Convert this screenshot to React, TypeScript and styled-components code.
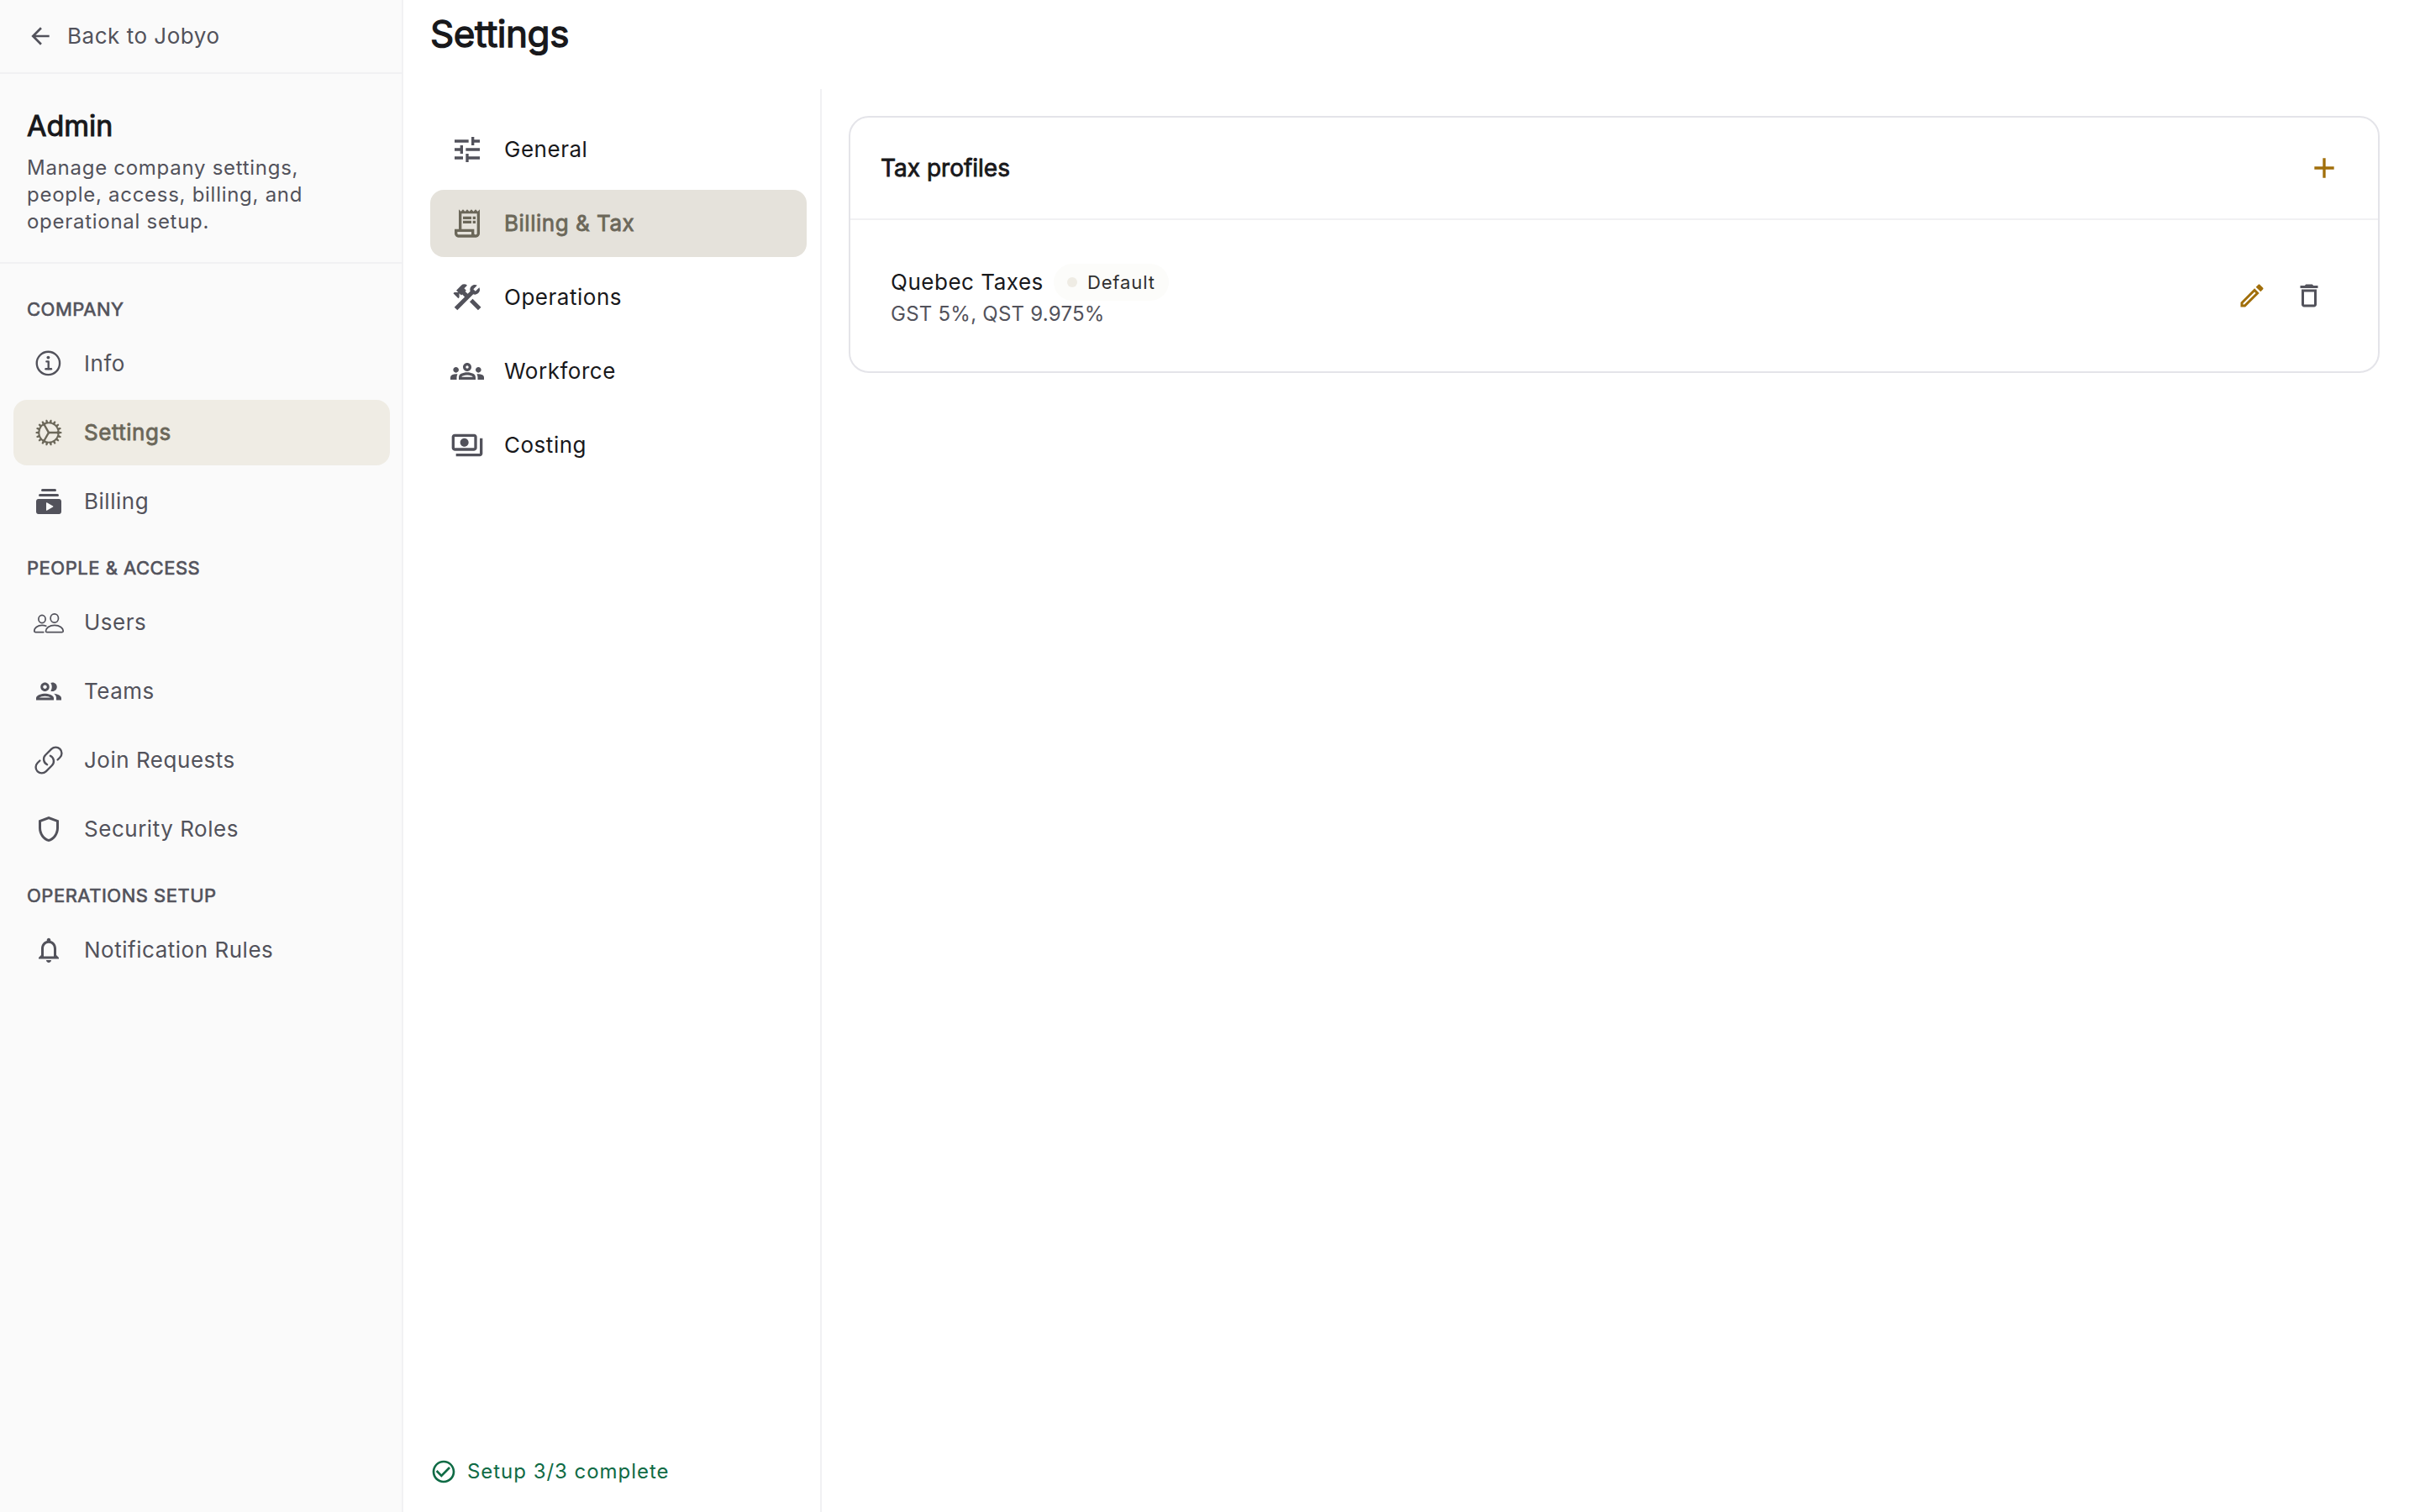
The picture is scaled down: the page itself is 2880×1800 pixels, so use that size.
import React from "react";
import styled, { createGlobalStyle, css } from "styled-components";
import {
  MdAdd,
  MdArrowBack,
  MdCheckCircleOutline,
  MdConstruction,
  MdDeleteOutline,
  MdNotificationsNone,
  MdOutlineEdit,
  MdOutlineGroups,
  MdOutlinePayments,
  MdOutlineReceiptLong,
  MdOutlineShield,
  MdTune,
} from "react-icons/md";
import { IoCogOutline, IoInformationCircleOutline } from "react-icons/io5";
import { HiOutlineLink } from "react-icons/hi2";

const color = {
  ink: "#18181b",
  muted: "#52525b",
  olive: "#6b6759",
  gold: "#a16f0b",
  green: "#0f6b45",
  line: "#f1f1f3",
  cardLine: "#e4e4e9",
  rail: "#fafafa",
  railActive: "#efece4",
  tabActive: "#e5e2db",
  chip: "#fcfcfa",
  chipText: "#303030",
  chipDot: "#efece4",
};

const GlobalStyle = createGlobalStyle`
  *, *::before, *::after { box-sizing: border-box; }
  body {
    margin: 0;
    background: #fff;
    color: ${color.ink};
    font-family: Inter, "Liberation Sans", sans-serif;
    font-size: 26px;
    line-height: 32px;
    letter-spacing: 0.02em;
  }
  h1, h2, h3, p, ul { margin: 0; padding: 0; font-weight: 400; }
  ul { list-style: none; }
  a { color: inherit; text-decoration: none; }
  svg { display: block; flex: none; }
`;

const emphasis = css`
  -webkit-text-stroke: 0.03em currentColor;
`;

const Shell = styled.div`
  display: grid;
  grid-template-columns: 480px minmax(0, 1fr);
  min-height: 100vh;
`;

const Rail = styled.aside`
  background: ${color.rail};
  border-right: 2px solid ${color.line};
  color: ${color.muted};
`;

const BackLink = styled.a`
  display: flex;
  align-items: center;
  gap: 16px;
  height: 88px;
  padding: 0 32px;
  border-bottom: 2px solid ${color.line};
`;

const Intro = styled.header`
  display: grid;
  gap: 12px;
  padding: 40px 32px 32px;
  border-bottom: 2px solid ${color.line};
`;

const IntroTitle = styled.h2`
  ${emphasis}
  color: ${color.ink};
  font-size: 34px;
  line-height: 44px;
  letter-spacing: normal;
`;

const IntroText = styled.p`
  font-size: 24px;
  letter-spacing: 0.03em;
`;

const RailNav = styled.nav`
  padding: 14px 14px 14px 16px;
`;

const RailHeading = styled.h3`
  ${emphasis}
  padding: 26px 16px 12px;
  font-size: 22px;
  line-height: 28px;
  text-transform: uppercase;
`;

const RailList = styled.ul`
  display: grid;
  gap: 4px;
`;

const navItem = css`
  display: flex;
  align-items: center;
  gap: 24px;
  padding: 0 24px;
  border-radius: 16px;
`;

const RailLink = styled.a<{ $active?: boolean }>`
  ${navItem}
  height: 78px;
  ${(p) =>
    p.$active &&
    css`
      ${emphasis}
      background: ${color.railActive};
      color: ${color.olive};
    `}
`;

const RailIcon = styled.span`
  display: flex;
  justify-content: center;
  width: 36px;
`;

const Main = styled.main`
  display: grid;
  grid-template-rows: auto 1fr;
`;

const PageHeader = styled.header`
  padding: 12px 32px 38px;
`;

const PageTitle = styled.h1`
  ${emphasis}
  font-size: 44px;
  line-height: 56px;
  letter-spacing: -0.01em;
`;

const Body = styled.div`
  display: grid;
  grid-template-columns: 498px minmax(0, 1fr);
`;

const Tabs = styled.div`
  display: flex;
  flex-direction: column;
  justify-content: space-between;
  padding: 32px 16px 32px 32px;
  border-right: 2px solid ${color.line};
`;

const TabList = styled.ul`
  display: grid;
  gap: 8px;
`;

const TabLink = styled.a<{ $active?: boolean }>`
  ${navItem}
  height: 80px;
  svg {
    color: ${color.muted};
  }
  ${(p) =>
    p.$active &&
    css`
      ${emphasis}
      background: ${color.tabActive};
      color: ${color.olive};
      svg {
        color: inherit;
      }
    `}
`;

const SetupStatus = styled.p`
  display: flex;
  align-items: center;
  gap: 12px;
  color: ${color.green};
  font-size: 24px;
  letter-spacing: 0.04em;
`;

const Content = styled.section`
  padding: 32px 48px 32px 32px;
`;

const Card = styled.section`
  border: 2px solid ${color.cardLine};
  border-radius: 24px;
`;

const CardHeader = styled.header`
  display: flex;
  align-items: center;
  justify-content: space-between;
  height: 122px;
  padding: 0 36px;
  border-bottom: 2px solid ${color.line};
`;

const CardTitle = styled.h2`
  ${emphasis}
  font-size: 28px;
  letter-spacing: normal;
`;

const IconButton = styled.button<{ $size: number; $tone: string }>`
  display: grid;
  place-items: center;
  width: ${(p) => p.$size}px;
  height: ${(p) => p.$size}px;
  padding: 0;
  border: 0;
  border-radius: 50%;
  background: none;
  color: ${(p) => p.$tone};
  cursor: pointer;
`;

const ProfileRow = styled.li`
  display: flex;
  align-items: center;
  justify-content: space-between;
  padding: 52px 48px;
`;

const ProfileName = styled.div`
  display: flex;
  align-items: center;
  gap: 12px;
`;

const Chip = styled.span`
  display: flex;
  align-items: center;
  gap: 12px;
  height: 44px;
  padding: 0 16px;
  border-radius: 22px;
  background: ${color.chip};
  color: ${color.chipText};
  font-size: 22px;
  letter-spacing: 0.04em;
  &::before {
    content: "";
    width: 12px;
    height: 12px;
    border-radius: 50%;
    background: ${color.chipDot};
  }
`;

const ProfileRates = styled.p`
  color: ${color.muted};
  font-size: 24px;
  letter-spacing: 0.01em;
`;

const Actions = styled.div`
  display: flex;
`;

const BillingIcon = ({ size }: { size: number }) => (
  <svg width={size} height={size} viewBox="0 0 24 24" fill="currentColor" aria-hidden="true">
    <rect x="6" y="2" width="12" height="2" rx="1" />
    <rect x="4" y="6" width="16" height="2" rx="1" />
    <path
      fillRule="evenodd"
      d="M3.8 10h16.4c1 0 1.8.8 1.8 1.8v8.4c0 1-.8 1.8-1.8 1.8H3.8c-1 0-1.8-.8-1.8-1.8v-8.4c0-1 .8-1.8 1.8-1.8zM10 13.1v5.8c0 .3.2.4.5.3l4.9-2.9c.3-.2.3-.4 0-.6l-4.9-2.9c-.3-.1-.5 0-.5.3z"
    />
  </svg>
);

const UsersIcon = ({ size }: { size: number }) => (
  <svg
    width={size}
    height={size}
    viewBox="0 0 36 36"
    fill="none"
    stroke="currentColor"
    strokeWidth="1.7"
    strokeLinecap="round"
    strokeLinejoin="round"
    aria-hidden="true"
  >
    <ellipse cx="10" cy="14" rx="4.1" ry="4.6" />
    <ellipse cx="24.8" cy="13" rx="4.7" ry="5.2" />
    <path d="M16 29.600c-1 0-1.500-.5-1.500-1.400 0-3.200 4.200-6.900 10.400-6.900s10.300 3.700 10.300 6.900c0 .9-.5 1.400-1.500 1.400z" />
    <path d="M14.800 22.200c-1.300-.6-2.900-.9-4.700-.9-5.600 0-9.300 3.600-9.300 6.700 0 1 .5 1.600 1.500 1.600h9.500" />
  </svg>
);

const TeamsIcon = ({ size }: { size: number }) => (
  <svg width={size} height={size} viewBox="0 0 24 24" fill="currentColor" aria-hidden="true">
    <path d="M9 13.75c-2.34 0-7 1.17-7 3.5V19h14v-1.75c0-2.33-4.66-3.5-7-3.5zM4.34 17c.84-.58 2.87-1.25 4.66-1.25s3.82.67 4.66 1.25H4.34zM9 12c1.93 0 3.5-1.57 3.5-3.5S10.93 5 9 5 5.5 6.57 5.5 8.5 7.07 12 9 12zm0-5c.83 0 1.5.67 1.5 1.5S9.83 10 9 10s-1.5-.67-1.5-1.5S8.17 7 9 7zm7.04 6.81c1.16.84 1.96 1.96 1.96 3.44V19h4v-1.75c0-2.02-3.5-3.17-5.96-3.44zM15 12c1.93 0 3.5-1.57 3.5-3.5S16.93 5 15 5c-.54 0-1.04.13-1.5.35.63.89 1 1.98 1 3.15s-.37 2.26-1 3.15c.46.22.96.35 1.5.35z" />
  </svg>
);

type Item = {
  label: string;
  Icon: React.ComponentType<{ size: number }>;
  size?: number;
  active?: boolean;
};

const sections: { title: string; items: Item[] }[] = [
  {
    title: "Company",
    items: [
      { label: "Info", Icon: IoInformationCircleOutline, size: 38 },
      { label: "Settings", Icon: IoCogOutline, size: 38, active: true },
      { label: "Billing", Icon: BillingIcon },
    ],
  },
  {
    title: "People & Access",
    items: [
      { label: "Users", Icon: UsersIcon },
      { label: "Teams", Icon: TeamsIcon },
      { label: "Join Requests", Icon: HiOutlineLink, size: 38 },
      { label: "Security Roles", Icon: MdOutlineShield },
    ],
  },
  {
    title: "Operations Setup",
    items: [{ label: "Notification Rules", Icon: MdNotificationsNone }],
  },
];

const tabs: Item[] = [
  { label: "General", Icon: MdTune },
  { label: "Billing & Tax", Icon: MdOutlineReceiptLong, active: true },
  { label: "Operations", Icon: MdConstruction },
  { label: "Workforce", Icon: MdOutlineGroups },
  { label: "Costing", Icon: MdOutlinePayments },
];

export default function App() {
  return (
    <>
      <GlobalStyle />
      <Shell>
        <Rail>
          <BackLink href="#home">
            <MdArrowBack size={32} />
            Back to Jobyo
          </BackLink>
          <Intro>
            <IntroTitle>Admin</IntroTitle>
            <IntroText>
              Manage company settings, people, access, billing, and operational setup.
            </IntroText>
          </Intro>
          <RailNav aria-label="Admin">
            {sections.map(({ title, items }) => (
              <section key={title}>
                <RailHeading>{title}</RailHeading>
                <RailList>
                  {items.map(({ label, Icon, size = 36, active }) => (
                    <li key={label}>
                      <RailLink href="#admin" $active={active} aria-current={active ? "page" : undefined}>
                        <RailIcon>
                          <Icon size={size} />
                        </RailIcon>
                        {label}
                      </RailLink>
                    </li>
                  ))}
                </RailList>
              </section>
            ))}
          </RailNav>
        </Rail>
        <Main>
          <PageHeader>
            <PageTitle>Settings</PageTitle>
          </PageHeader>
          <Body>
            <Tabs>
              <nav aria-label="Settings">
                <TabList>
                  {tabs.map(({ label, Icon, active }) => (
                    <li key={label}>
                      <TabLink href="#settings" $active={active} aria-current={active ? "page" : undefined}>
                        <Icon size={40} />
                        {label}
                      </TabLink>
                    </li>
                  ))}
                </TabList>
              </nav>
              <SetupStatus>
                <MdCheckCircleOutline size={32} />
                Setup 3/3 complete
              </SetupStatus>
            </Tabs>
            <Content>
              <Card>
                <CardHeader>
                  <CardTitle>Tax profiles</CardTitle>
                  <IconButton $size={56} $tone={color.gold} aria-label="Add tax profile">
                    <MdAdd size={40} />
                  </IconButton>
                </CardHeader>
                <ul>
                  <ProfileRow>
                    <div>
                      <ProfileName>
                        Quebec Taxes
                        <Chip>Default</Chip>
                      </ProfileName>
                      <ProfileRates>GST 5%, QST 9.975%</ProfileRates>
                    </div>
                    <Actions>
                      <IconButton $size={68} $tone={color.gold} aria-label="Edit Quebec Taxes">
                        <MdOutlineEdit size={36} />
                      </IconButton>
                      <IconButton $size={68} $tone={color.muted} aria-label="Delete Quebec Taxes">
                        <MdDeleteOutline size={36} />
                      </IconButton>
                    </Actions>
                  </ProfileRow>
                </ul>
              </Card>
            </Content>
          </Body>
        </Main>
      </Shell>
    </>
  );
}
